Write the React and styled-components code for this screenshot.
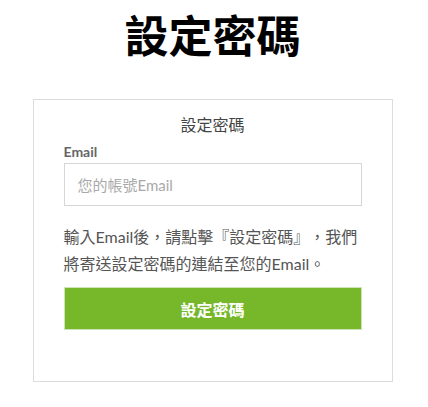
import React from "react";
import styled, { createGlobalStyle } from "styled-components";

const Global = createGlobalStyle`
  html, body { margin: 0; padding: 0; background: #fff; }
  body { font-family: Lato, "Noto Sans CJK TC", sans-serif; }
  * { box-sizing: border-box; }
`;

const Page = styled.div`
  width: 425px;
  display: flex;
  flex-direction: column;
  align-items: center;
  padding-top: 6px;
`;

const Title = styled.h1`
  margin: 0;
  font-family: "Noto Sans CJK TC", sans-serif;
  font-size: 44px;
  font-weight: 700;
  line-height: 56px;
  color: #000;
`;

const Card = styled.div`
  margin-top: 37px;
  width: 360px;
  border: 1px solid #dcdcdc;
  padding: 12px 30px 51px;
  display: flex;
  flex-direction: column;
`;

const CardTitle = styled.div`
  text-align: center;
  font-family: "Noto Sans CJK TC", sans-serif;
  font-size: 16px;
  line-height: 24px;
  color: #444;
`;

const Label = styled.label`
  margin-top: 7px;
  font-family: Lato, "Noto Sans CJK TC", sans-serif;
  font-weight: 700;
  font-size: 14px;
  line-height: 18px;
  color: #666;
`;

const Input = styled.input`
  margin-top: 2px;
  height: 43px;
  width: 100%;
  border: 1px solid #d6d6d6;
  padding: 0 13px;
  font-family: Lato, "Noto Sans CJK TC", sans-serif;
  font-size: 15px;
  color: #333;
  outline: none;
  &::placeholder { color: #a9a9a9; }
`;

const Note = styled.p`
  margin: 17px 0 0;
  font-family: Lato, "Noto Sans CJK TC", sans-serif;
  font-size: 16px;
  line-height: 27px;
  color: #555;
  text-spacing-trim: space-all;
`;

const Button = styled.button`
  margin-top: 10px;
  height: 43px;
  width: 100%;
  border: 1px solid #cfe3b8;
  background: #76b82a;
  color: #fff;
  font-family: "Noto Sans CJK TC", sans-serif;
  font-size: 16px;
  font-weight: 700;
  cursor: pointer;
`;

export default function App() {
  return (
    <>
      <Global />
      <Page>
        <Title>設定密碼</Title>
        <Card>
          <CardTitle>設定密碼</CardTitle>
          <Label htmlFor="email">Email</Label>
          <Input id="email" type="email" placeholder="您的帳號Email" />
          <Note>輸入Email後，請點擊『設定密碼』，我們將寄送設定密碼的連結至您的Email。</Note>
          <Button>設定密碼</Button>
        </Card>
      </Page>
    </>
  );
}
